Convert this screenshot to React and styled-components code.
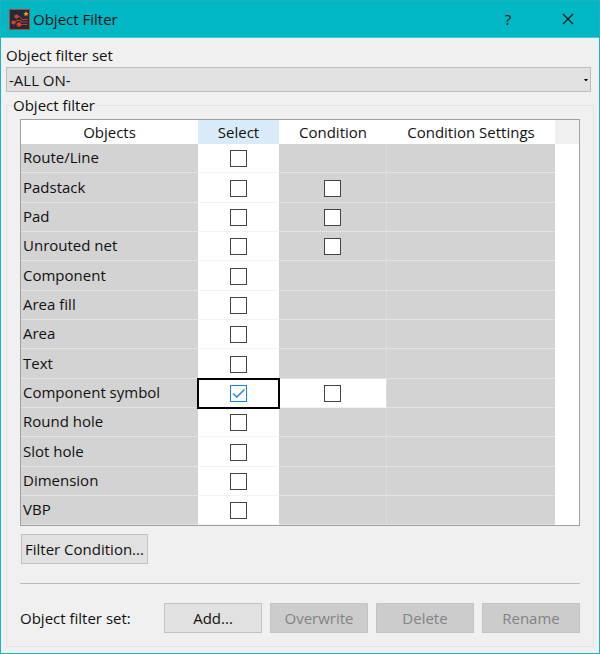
import React, { useState } from "react";
import styled, { createGlobalStyle, css } from "styled-components";

const GlobalStyle = createGlobalStyle`
  *, *::before, *::after { box-sizing: border-box; }
  body { margin: 0; background: #f0f0f0; }
  body, button, select, input {
    font-family: "Open Sans", "Noto Sans", sans-serif;
    font-size: 15px;
    line-height: 20px;
    color: #111;
  }
`;

const Dialog = styled.main`
  display: flex;
  flex-direction: column;
  min-height: 100vh;
  background: #f0f0f0;
  border: 1px solid #1fb3c2;
  border-top: 0;
`;

const TitleBar = styled.header`
  display: flex;
  align-items: center;
  height: 38px;
  padding: 0 8px;
  background: #00b7c3;
  border-top: 1px solid #1ab2bf;
  border-bottom: 1px solid #45c8d1;
`;

const Title = styled.h1`
  flex: 1;
  margin: 0 0 0 3px;
  font-size: 15px;
  font-weight: 400;
  line-height: 20px;
`;

const CaptionButton = styled.button`
  display: grid;
  place-items: center;
  width: 60px;
  height: 36px;
  padding: 0;
  border: 0;
  background: transparent;
`;

const CaptionGroup = styled.div`
  display: flex;
  margin-right: -7px;
`;

const Content = styled.div`
  display: flex;
  flex: 1;
  flex-direction: column;
  padding: 7px 5px 6px;
`;

const FieldLabel = styled.label`
  line-height: 20px;
`;

const Combo = styled.div`
  display: grid;
  align-items: center;
  margin: 2px 3px 0 0;

  > * { grid-area: 1 / 1; }
  > svg { justify-self: end; margin-right: 3px; pointer-events: none; }
`;

const ComboSelect = styled.select`
  appearance: none;
  width: 100%;
  height: 25px;
  padding: 1px 2px 0;
  border: 1px solid #bdbdbd;
  border-radius: 0;
  background: #e1e1e1;
`;

const Group = styled.fieldset`
  flex: 1;
  min-width: 0;
  margin: 3px 0 0;
  padding: 4px 13px 13px;
  border: 1px solid #e3e3e3;
`;

const Legend = styled.legend`
  margin-left: -8px;
  padding: 0 1px;
  line-height: 20px;
`;

const TableFrame = styled.div`
  border: 1px solid #a0a0a0;
  background: #fff;
`;

const Table = styled.table`
  width: 100%;
  table-layout: fixed;
  border-collapse: separate;
  border-spacing: 0;
`;

const Col = styled.col`
  width: ${(p) => p.$width};
`;

const HeadCell = styled.th`
  height: 24px;
  padding: 0;
  font-weight: 400;
  line-height: 20px;
  background: ${(p) => (p.$active ? "#d9ebf9" : "#fff")};
`;

const HeadFiller = styled.td`
  padding: 0;
  background: #f0f0f0;
`;

const BodyRow = styled.tr`
  height: 29px;
  &:nth-child(3n + 2) { height: 30px; }
`;

const cell = css`
  padding: 0;
  border-bottom: 1px solid #e3e3e3;
  background: #d3d3d3;
`;

const NameCell = styled.th`
  ${cell}
  padding: 0 0 2px 2px;
  font-weight: 400;
  text-align: left;
`;

const Cell = styled.td`
  ${cell}
  border-right: ${(p) => (p.$ruled ? "1px solid #dcdcdc" : "0")};
  ${(p) => p.$open && css`
    background: #fff;
    border-bottom-color: #f3f3f3;
  `}
  ${(p) => p.$current && css`
    outline: 2px solid #000;
    outline-offset: -1px;
  `}
`;

const Filler = styled.td`
  padding: 0;
  background: #fff;
`;

const CheckBox = styled.label`
  display: grid;
  width: 17px;
  height: 17px;
  margin: 1px auto 0;

  > * { grid-area: 1 / 1; }
  > svg { pointer-events: none; visibility: hidden; }
  > input:checked + svg { visibility: visible; }
`;

const CheckInput = styled.input`
  appearance: none;
  width: 17px;
  height: 17px;
  margin: 0;
  border: 1px solid #444;
  background: #fff;

  &:checked { border-color: #1a80d8; }
`;

const Button = styled.button`
  height: 30px;
  padding: 0 3px;
  border: 1px solid #c2c2c2;
  background: #e1e1e1;

  &:disabled {
    border-color: #c4c4c4;
    background: #cccccc;
    color: #838383;
  }
`;

const FilterButton = styled(Button)`
  display: block;
  margin: 8px 1px 0;
`;

const Divider = styled.hr`
  height: 1px;
  margin: 19px 0;
  border: 0;
  background: #bcbcbc;
`;

const Footer = styled.div`
  display: grid;
  grid-template-columns: 1fr repeat(4, 98px);
  gap: 8px;
  align-items: center;
`;

function AppIcon() {
  return (
    <svg width="21" height="21" viewBox="0 0 21 21" aria-hidden="true">
      <rect x="0.5" y="0.5" width="20" height="20" fill="#242b38" stroke="#a9483f" />
      <path d="M7 7.500 H10.500 L13 10.500 H18.500 M4 14 L8 11.500 H11 L13 13 H18.500 M10 15.500 H18.500" fill="none" stroke="#c93a2c" strokeWidth="1" />
      <circle cx="7.500" cy="7.500" r="2.100" fill="#e23b28" />
      <circle cx="4.500" cy="13.500" r="2.100" fill="#e23b28" />
      <circle cx="10" cy="15.500" r="2.300" fill="#e23b28" />
      <path d="M17 2 L17.800 4 H19.700 L18.200 5.300 L18.700 7.200 L17 6.100 L15.300 7.200 L15.800 5.300 L14.300 4 H16.200 Z" fill="#f5a51d" />
    </svg>
  );
}

function Check({ label, checked, onChange }) {
  return (
    <CheckBox>
      <CheckInput type="checkbox" aria-label={label} checked={checked} onChange={onChange} />
      <svg width="17" height="17" viewBox="0 0 17 17" aria-hidden="true">
        <path d="M3 8.500 L6.800 12 L14.500 4.500" fill="none" stroke="#1a80d8" strokeWidth="1.300" />
      </svg>
    </CheckBox>
  );
}

const rows = [
  { name: "Route/Line" },
  { name: "Padstack", condition: true },
  { name: "Pad", condition: true },
  { name: "Unrouted net", condition: true },
  { name: "Component" },
  { name: "Area fill" },
  { name: "Area" },
  { name: "Text" },
  { name: "Component symbol", condition: true },
  { name: "Round hole" },
  { name: "Slot hole" },
  { name: "Dimension" },
  { name: "VBP" },
];

export default function App() {
  const [selected, setSelected] = useState({ "Component symbol": true });
  const [conditions, setConditions] = useState({});
  const toggle = (setter, name) => setter((s) => ({ ...s, [name]: !s[name] }));

  return (
    <>
      <GlobalStyle />
      <Dialog>
        <TitleBar>
          <AppIcon />
          <Title>Object Filter</Title>
          <CaptionGroup>
            <CaptionButton aria-label="Help">?</CaptionButton>
            <CaptionButton aria-label="Close">
              <svg width="12" height="12" viewBox="0 0 12 12" aria-hidden="true">
                <path d="M1 1 L11 11 M11 1 L1 11" stroke="#111" strokeWidth="1.100" />
              </svg>
            </CaptionButton>
          </CaptionGroup>
        </TitleBar>
        <Content>
          <FieldLabel htmlFor="filter-set">Object filter set</FieldLabel>
          <Combo>
            <ComboSelect id="filter-set">
              <option>-ALL ON-</option>
            </ComboSelect>
            <svg width="4" height="2" viewBox="0 0 4 2" aria-hidden="true">
              <path d="M0 0 H4 L2.500 2 H1.500 Z" fill="#000" />
            </svg>
          </Combo>
          <Group>
            <Legend>Object filter</Legend>
            <TableFrame>
              <Table>
                <colgroup>
                  <Col $width="177px" />
                  <Col $width="81px" />
                  <Col $width="108px" />
                  <Col $width="auto" />
                  <Col $width="24px" />
                </colgroup>
                <thead>
                  <tr>
                    <HeadCell scope="col">Objects</HeadCell>
                    <HeadCell scope="col" $active>Select</HeadCell>
                    <HeadCell scope="col">Condition</HeadCell>
                    <HeadCell scope="col">Condition Settings</HeadCell>
                    <HeadFiller />
                  </tr>
                </thead>
                <tbody>
                  {rows.map(({ name, condition }) => (
                    <BodyRow key={name}>
                      <NameCell scope="row">{name}</NameCell>
                      <Cell $open $current={name === "Component symbol"}>
                        <Check
                          label={`Select ${name}`}
                          checked={!!selected[name]}
                          onChange={() => toggle(setSelected, name)}
                        />
                      </Cell>
                      <Cell $ruled $open={name === "Component symbol"}>
                        {condition && (
                          <Check
                            label={`Condition for ${name}`}
                            checked={!!conditions[name]}
                            onChange={() => toggle(setConditions, name)}
                          />
                        )}
                      </Cell>
                      <Cell />
                      <Filler />
                    </BodyRow>
                  ))}
                </tbody>
              </Table>
            </TableFrame>
            <FilterButton>Filter Condition...</FilterButton>
            <Divider />
            <Footer>
              <span>Object filter set:</span>
              <Button>Add...</Button>
              <Button disabled>Overwrite</Button>
              <Button disabled>Delete</Button>
              <Button disabled>Rename</Button>
            </Footer>
          </Group>
        </Content>
      </Dialog>
    </>
  );
}
